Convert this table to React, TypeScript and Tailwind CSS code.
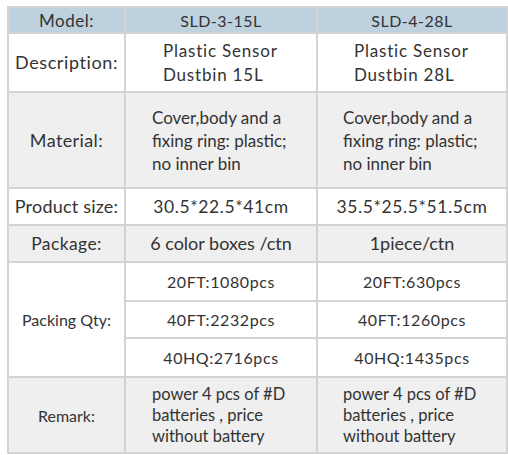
const FONT = "font-['Lato','Open_Sans',sans-serif]";

const cell = "border-2 border-[#d3d3d3] text-[16px] text-[#333333]";

function Label({ children, h, gray }: { children: React.ReactNode; h: string; gray?: boolean }) {
  return (
    <td className={`${cell} ${h} ${gray ? "bg-[#efefef]" : "bg-white"} text-center align-middle`}>
      {children}
    </td>
  );
}

function Val({
  children,
  gray,
  pad,
  rowSpan,
}: {
  children: React.ReactNode;
  gray?: boolean;
  pad?: string;
  rowSpan?: number;
}) {
  return (
    <td
      rowSpan={rowSpan}
      className={`${cell} ${gray ? "bg-[#efefef]" : "bg-white"} ${pad ? `text-left ${pad}` : "text-center"} align-middle`}
    >
      {children}
    </td>
  );
}

export default function App() {
  return (
    <div className={`h-[455px] w-[508px] bg-white pt-[6px] pl-[7px] ${FONT}`}>
      <table className="w-[499px] table-fixed border-collapse leading-[23px]">
        <colgroup>
          <col className="w-[117px]" />
          <col className="w-[192px]" />
          <col className="w-[190px]" />
        </colgroup>
        <tbody>
          <tr className="h-[26px] bg-[#bed1df]">
            <td className={`${cell} text-center text-[17px] tracking-[0.5px]`}>Model:</td>
            <td className={`${cell} text-center tracking-[0.5px]`}>SLD-3-15L</td>
            <td className={`${cell} text-center tracking-[0.5px]`}>SLD-4-28L</td>
          </tr>
          <tr>
            <Label h="h-[59px]">
              <span className="text-[18px] tracking-[0.6px]">Description:</span>
            </Label>
            <Val pad="pl-[37px]">
              <div className="text-[17px] tracking-[0.8px] leading-[24px]">
                Plastic Sensor
                <br />
                Dustbin 15L
              </div>
            </Val>
            <Val pad="pl-[36px]">
              <div className="text-[17px] tracking-[0.8px] leading-[24px]">
                Plastic Sensor
                <br />
                Dustbin 28L
              </div>
            </Val>
          </tr>
          <tr>
            <Label h="h-[96px]" gray>
              <span className="text-[18px] tracking-[0.4px]">Material:</span>
            </Label>
            <Val gray pad="pl-[26px]">
              <div className="text-[17px]">
                Cover,body and a
                <br />
                fixing ring: plastic;
                <br />
                no inner bin
              </div>
            </Val>
            <Val gray pad="pl-[25px]">
              <div className="text-[17px]">
                Cover,body and a
                <br />
                fixing ring: plastic;
                <br />
                no inner bin
              </div>
            </Val>
          </tr>
          <tr>
            <Label h="h-[37px]">
              <span className="text-[18px] tracking-[0.2px]">Product size:</span>
            </Label>
            <Val>
              <span className="text-[17.5px] tracking-[0.6px]">30.5*22.5*41cm</span>
            </Val>
            <Val>
              <span className="text-[17.5px] tracking-[0.6px]">35.5*25.5*51.5cm</span>
            </Val>
          </tr>
          <tr>
            <Label h="h-[37px]" gray>
              <span className="text-[17.5px] tracking-[0.4px]">Package:</span>
            </Label>
            <Val gray>
              <span className="text-[18px]">6 color boxes /ctn</span>
            </Val>
            <Val gray>
              <span className="text-[18px]">1piece/ctn</span>
            </Val>
          </tr>
          <tr className="h-[39px]">
            <td rowSpan={3} className={`${cell} bg-white text-center text-[14px]`}>
              Packing Qty:
            </td>
            <Val>
              <span className="tracking-[0.6px]">20FT:1080pcs</span>
            </Val>
            <Val>
              <span className="tracking-[0.6px]">20FT:630pcs</span>
            </Val>
          </tr>
          <tr className="h-[37px]">
            <Val>
              <span className="tracking-[0.6px]">40FT:2232pcs</span>
            </Val>
            <Val>
              <span className="tracking-[0.6px]">40FT:1260pcs</span>
            </Val>
          </tr>
          <tr className="h-[39px]">
            <Val>
              <span className="tracking-[0.6px]">40HQ:2716pcs</span>
            </Val>
            <Val>
              <span className="tracking-[0.6px]">40HQ:1435pcs</span>
            </Val>
          </tr>
          <tr>
            <Label h="h-[76px]" gray>
              <span className="text-[16px]">Remark:</span>
            </Label>
            <Val gray pad="pl-[26px]">
              <div className="text-[16.5px] leading-[21px]">
                power 4 pcs of #D
                <br />
                batteries , price
                <br />
                without battery
              </div>
            </Val>
            <Val gray pad="pl-[25px]">
              <div className="text-[16.5px] leading-[21px]">
                power 4 pcs of #D
                <br />
                batteries , price
                <br />
                without battery
              </div>
            </Val>
          </tr>
        </tbody>
      </table>
    </div>
  );
}
